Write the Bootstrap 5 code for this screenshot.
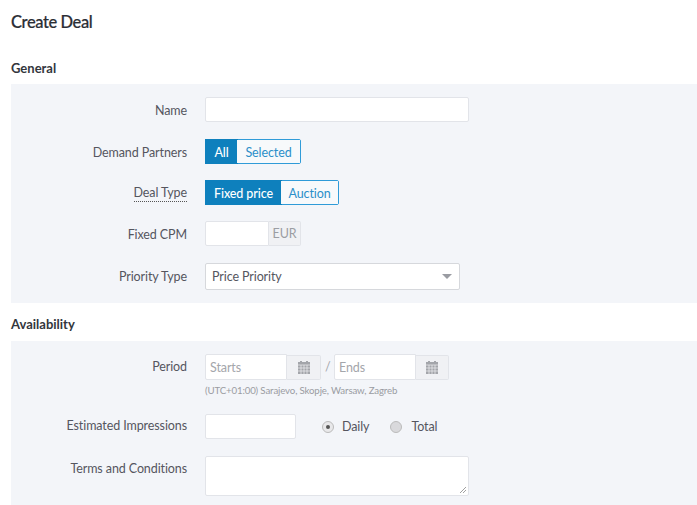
<!DOCTYPE html>
<html lang="en">
<head>
<meta charset="utf-8">
<title>Create Deal</title>
<link href="https://cdn.jsdelivr.net/npm/bootstrap@5.3.0/dist/css/bootstrap.min.css" rel="stylesheet">
<style>
html, body { height: 505px; overflow: hidden; }
body { background: #fff; font-family: "Lato", "Liberation Sans", sans-serif; font-size: 12.5px; letter-spacing: -.1px; color: #55565f; padding-left: 11px; }
.page-title { font-size: 16.5px; font-weight: 500; letter-spacing: -.4px; color: #2b2e35; line-height: 24px; margin: 0; padding-top: 10px; height: 57px; -webkit-text-stroke: .2px #2b2e35; }
.sect-title { font-size: 13px; font-weight: 700; letter-spacing: 0; color: #33363d; line-height: 20px; margin: 0; height: 27px; padding-top: 1px; }
.sect-second { padding-top: 0; }
.panel-box { background: #f3f5f9; }
.panel-a { height: 219px; padding-top: 13px; margin-bottom: 11px; }
.panel-b { height: 164px; padding-top: 13px; }
.f-row { display: flex; align-items: flex-start; }
.f-label { width: 176px; text-align: right; flex: none; margin-right: 18px; line-height: 25px; }
.lbl-low { line-height: 27px; }
.lbl-high { line-height: 23px; }
.f-input { display: block; background: #fff; border: 1px solid #e2e4e9; border-radius: 2px; height: 25px; padding: 0 4px; }
.w-name { width: 264px; }
.row-42 { height: 42px; }
.row-41 { height: 41px; }
.row-60 { height: 60px; }
.seg { display: inline-flex; height: 25px; border: 1px solid #2f9bd8; border-radius: 2px; }
.seg span { text-align: center; line-height: 25px; color: #2b8fc9; background: #f7f9fb; }
.seg span.on { background: #0e80bd; color: #fff; font-weight: 500; box-shadow: 0 0 0 1px #0e80bd; }
.w-all { width: 31px; }
.w-sel { width: 63px; }
.w-fix { width: 75px; }
.w-auc { width: 57px; }
.dash-lbl { border-bottom: 1px dotted #555; padding-bottom: 1px; }
.addon { background: #f0f1f4; border: 1px solid #e2e4e9; border-left: 0; border-radius: 0 2px 2px 0; height: 25px; color: #9b9da3; display: flex; align-items: center; justify-content: center; }
.addon-text { padding-top: 2px; }
.in-left { border-radius: 2px 0 0 2px; }
.w-cpm { width: 64px; }
.w-eur { width: 32px; }
.w-date { width: 82px; height: 26px; line-height: 26px; }
.w-cal1 { width: 34px; }
.w-cal2 { width: 33px; }
.w-imp { width: 91px; }
.sel-box { width: 255px; height: 27px; background: #fff; border: 1px solid #d6d8dc; border-radius: 2px; padding: 0 6px; display: flex; align-items: center; justify-content: space-between; }
.sel-text { padding-top: 2px; }
.caret-d { width: 0; height: 0; border-left: 5px solid transparent; border-right: 5px solid transparent; border-top: 5px solid #9a9ca2; margin-right: 1px; }
.ph { color: #a4a6ab; }
.slash { width: 5px; }
.tz-note { font-size: 9.7px; letter-spacing: -.15px; color: #9a9ca2; line-height: 14px; margin-top: 3px; }
.radio-wrap { height: 25px; margin-left: 26px; gap: 8px; }
.radio-txt { padding-top: 2px; }
.radio-last { margin-left: 1px; }
.radio-dot { width: 12px; height: 12px; border-radius: 50%; background: #d9d9dc; border: 1px solid #bbb; display: inline-block; position: relative; }
.radio-dot.on { background: #e8e8ea; }
.radio-dot.on::after { content: ""; position: absolute; left: 3px; top: 3px; width: 4px; height: 4px; border-radius: 50%; background: #555; }
.radio-gap { margin-left: 13px; }
.ta-box { width: 264px; height: 40px; background: #fff; border: 1px solid #e2e4e9; border-radius: 2px; position: relative; }
.ta-grip { position: absolute; right: 1px; bottom: 1px; }
</style>
</head>
<body>
<h1 class="page-title">Create Deal</h1>
<h2 class="sect-title">General</h2>
<section class="panel-box panel-a">
  <div class="f-row row-42"><div class="f-label lbl-low">Name</div><div class="f-input w-name"></div></div>
  <div class="f-row row-41"><div class="f-label lbl-low">Demand Partners</div><div class="seg"><span class="on w-all">All</span><span class="w-sel">Selected</span></div></div>
  <div class="f-row row-41"><div class="f-label"><span class="dash-lbl">Deal Type</span></div><div class="seg"><span class="on w-fix">Fixed price</span><span class="w-auc">Auction</span></div></div>
  <div class="f-row row-42"><div class="f-label lbl-low">Fixed CPM</div><div class="d-flex"><div class="f-input in-left w-cpm"></div><div class="addon addon-text w-eur">EUR</div></div></div>
  <div class="f-row"><div class="f-label lbl-low">Priority Type</div><div class="sel-box"><span class="sel-text">Price Priority</span><i class="caret-d"></i></div></div>
</section>
<h2 class="sect-title sect-second">Availability</h2>
<section class="panel-box panel-b">
  <div class="f-row row-60">
    <div class="f-label">Period</div>
    <div>
      <div class="d-flex align-items-center">
        <div class="f-input ph in-left w-date">Starts</div>
        <div class="addon w-cal1"><svg width="14" height="14" viewBox="0 0 14 14"><path fill="#a3a5aa" d="M1 2h2V1h2v1h4V1h2v1h2v12H1z"/><path stroke="#f0f1f4" stroke-width=".7" d="M1 5h12M1 8h12M1 11h12M4 5v9M7 5v9M10 5v9"/></svg></div>
        <span class="ph mx-1 slash">/</span>
        <div class="f-input ph in-left w-date">Ends</div>
        <div class="addon w-cal2"><svg width="14" height="14" viewBox="0 0 14 14"><path fill="#a3a5aa" d="M1 2h2V1h2v1h4V1h2v1h2v12H1z"/><path stroke="#f0f1f4" stroke-width=".7" d="M1 5h12M1 8h12M1 11h12M4 5v9M7 5v9M10 5v9"/></svg></div>
      </div>
      <div class="tz-note">(UTC+01:00) Sarajevo, Skopje, Warsaw, Zagreb</div>
    </div>
  </div>
  <div class="f-row row-42">
    <div class="f-label lbl-high">Estimated Impressions</div>
    <div class="f-input w-imp"></div>
    <div class="d-flex align-items-center radio-wrap"><i class="radio-dot on"></i><span class="radio-txt">Daily</span><i class="radio-dot radio-gap"></i><span class="radio-txt radio-last">Total</span></div>
  </div>
  <div class="f-row">
    <div class="f-label">Terms and Conditions</div>
    <div class="ta-box"><svg class="ta-grip" width="8" height="8" viewBox="0 0 8 8"><path stroke="#888" stroke-width=".8" d="M1 7l6-6M4 7l3-3"/></svg></div>
  </div>
</section>
<script src="https://cdn.jsdelivr.net/npm/bootstrap@5.3.0/dist/js/bootstrap.bundle.min.js"></script>
</body>
</html>
